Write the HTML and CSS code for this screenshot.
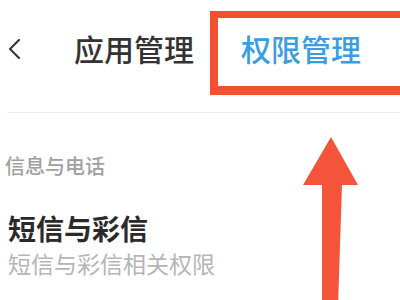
FILE: index.html
```html
<!DOCTYPE html>
<html lang="zh-CN">
<head>
<meta charset="utf-8">
<link rel="stylesheet" href="styles.css">
</head>
<body>
<div class="page">
  <header class="topbar">
    <svg class="back" width="14" height="24" viewBox="0 0 14 24"><path d="M12 3 L3 12 L12 21" fill="none" stroke="#3a3a3a" stroke-width="2.2" stroke-linecap="round" stroke-linejoin="round"/></svg>
    <span class="tab">应用管理</span>
    <span class="tab active">权限管理</span>
  </header>
  <section class="group">
    <div class="group-title">信息与电话</div>
    <div class="item">
      <div class="item-name">短信与彩信</div>
      <div class="item-desc">短信与彩信相关权限</div>
    </div>
  </section>
  <div class="highlight"></div>
  <svg class="arrow" width="60" height="170" viewBox="0 0 60 170"><polygon points="28,0 55,48 39,48 35,170 19,170 19,48 0,48" fill="#f4553a"/></svg>
</div>
</body>
</html>
```
FILE: styles.css
```css
html, body {
  margin: 0;
  padding: 0;
  background: #fff;
}
.page {
  position: relative;
  width: 400px;
  height: 300px;
  overflow: hidden;
  font-family: "Noto Sans CJK SC", "Noto Sans", sans-serif;
}
.topbar {
  display: flex;
  align-items: center;
  height: 112px;
  margin-left: 7px;
  border-bottom: 1px solid #eeeeee;
}
.back {
  flex: none;
  margin-top: -14px;
}
.tab {
  font-size: 30px;
  line-height: 1;
  font-weight: 500;
  color: #333;
  margin-left: 53px;
  margin-top: -17px;
}
.tab.active {
  color: #3b9de0;
  margin-left: 47px;
}
.group {
  padding-left: 5px;
}
.group-title {
  font-size: 20px;
  line-height: 1;
  font-weight: 500;
  color: #a0a0a0;
  margin-top: 43px;
}
.item {
  margin-top: 38px;
  padding-left: 3px;
}
.item-name {
  font-size: 28px;
  line-height: 1;
  font-weight: 700;
  color: #2a2a2a;
}
.item-desc {
  font-size: 23px;
  line-height: 1;
  color: #b5b5b5;
  margin-top: 10px;
}
.highlight {
  position: absolute;
  left: 210px;
  top: 11px;
  width: 200px;
  height: 84px;
  box-sizing: border-box;
  border: 8px solid #f2522f;
  border-top-width: 7px;
  border-bottom-width: 9px;
}
.arrow {
  position: absolute;
  left: 303px;
  top: 137px;
}
```
